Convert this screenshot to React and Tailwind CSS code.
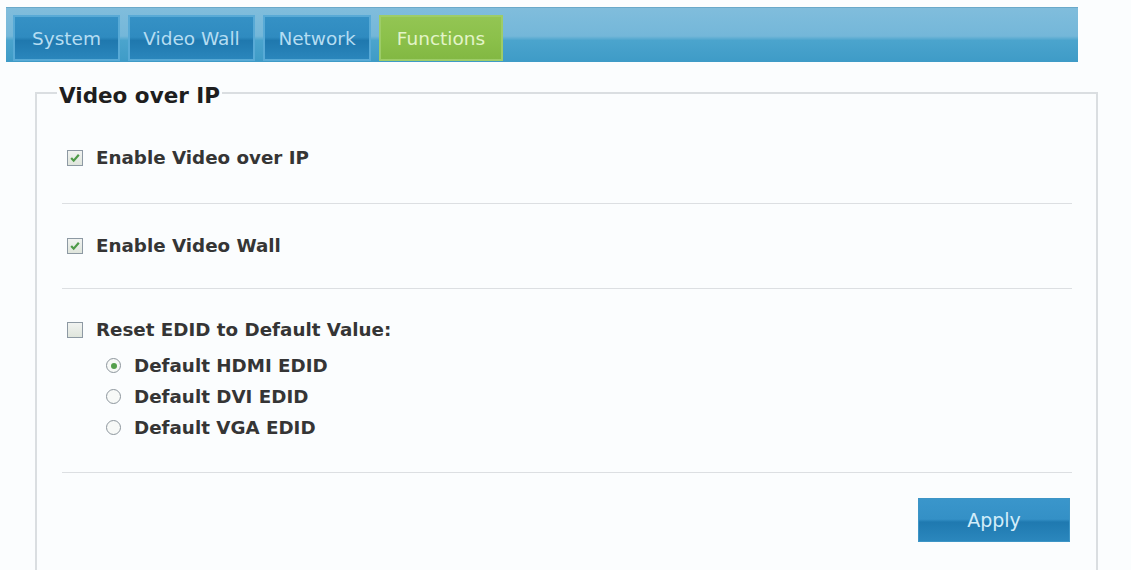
import { useState } from "react";

const tabs = [
    { label: "System", w: "w-[107px]" },
    { label: "Video Wall", w: "w-[127px]" },
    { label: "Network", w: "w-[108px]" },
    { label: "Functions", w: "w-[124px]", active: true },
];

function CheckBox({ checked, onClick }) {
    return (
        <span
            onClick={onClick}
            className="w-[16px] h-[16px] border border-[#8d99a3] bg-[linear-gradient(180deg,#f1f3f1,#dfe5dc)] flex items-center justify-center shrink-0 cursor-pointer"
        >
            {checked && (
                <svg width="12" height="12" viewBox="0 0 11 11">
                    <path
                        d="M2 5.5 L4.3 8 L9 2.5"
                        fill="none"
                        stroke="#4e9a48"
                        strokeWidth="2"
                    />
                </svg>
            )}
        </span>
    );
}

function Radio({ checked, onClick }) {
    return (
        <span
            onClick={onClick}
            className="w-[15px] h-[15px] rounded-full border border-[#8d969d] bg-[#f7f9f7] flex items-center justify-center shrink-0 cursor-pointer"
        >
            {checked && (
                <span className="w-[6px] h-[6px] rounded-full bg-[#55a04c]"></span>
            )}
        </span>
    );
}

export default function App() {
    const [vip, setVip] = useState(true);
    const [wall, setWall] = useState(true);
    const [reset, setReset] = useState(false);
    const [edid, setEdid] = useState("hdmi");

    const edids = [
        { key: "hdmi", label: "Default HDMI EDID" },
        { key: "dvi", label: "Default DVI EDID" },
        { key: "vga", label: "Default VGA EDID" },
    ];

    return (
        <div className="h-screen bg-[#fbfdfe] pt-[7px] pl-[6px] font-['DejaVu_Sans',Verdana,sans-serif] overflow-hidden">
            {/* Tab bar */}
            <div className="w-[1072px] h-[55px] border-t border-[#6aa9c9] bg-[linear-gradient(180deg,#80bddc_0%,#74b7d9_52%,#4ba4cd_60%,#3e9bc7_100%)] flex items-end pl-[7px] gap-[8px] pb-px">
                {tabs.map((t) => (
                    <div
                        key={t.label}
                        className={`${t.w} h-[46px] pt-[2px] flex items-center justify-center text-[18.5px] border-2 ${
                            t.active
                                ? "bg-[linear-gradient(180deg,#93c553_0%,#8bc04a_55%,#82b843_100%)] border-[#9dcc68] text-[#e3f4c8]"
                                : "bg-[linear-gradient(180deg,#3591c5_0%,#2f8bc0_48%,#1f78ae_56%,#2a86bc_100%)] border-[#58aad6] text-[#b5ddf2]"
                        }`}
                    >
                        {t.label}
                    </div>
                ))}
            </div>

            {/* Video over IP */}
            <fieldset className="ml-[29px] mt-[16px] w-[1063px] h-[520px] border-2 border-[#dadee1] pl-[20px] pr-[24px]">
                <legend className="px-[2px] pt-[6px] text-[21.5px] font-bold text-[#1e1e1e] leading-[24px]">
                    Video over IP
                </legend>

                <div className="ml-[5px] text-[18.3px] font-bold text-[#353535]">
                    <div className="pt-[38px] pb-[33px] border-b border-[#dcdfe2]">
                        <label className="h-[24px] flex items-center gap-[13px] pl-[5px]">
                            <CheckBox checked={vip} onClick={() => setVip(!vip)} />
                            Enable Video over IP
                        </label>
                    </div>

                    <div className="pt-[30px] pb-[30px] border-b border-[#dcdfe2]">
                        <label className="h-[24px] flex items-center gap-[13px] pl-[5px]">
                            <CheckBox checked={wall} onClick={() => setWall(!wall)} />
                            Enable Video Wall
                        </label>
                    </div>

                    <div className="pt-[29px] pb-[29px] border-b border-[#dcdfe2]">
                        <label className="h-[24px] flex items-center gap-[13px] pl-[5px]">
                            <CheckBox checked={reset} onClick={() => setReset(!reset)} />
                            Reset EDID to Default Value:
                        </label>
                        <div className="mt-[8px] pl-[44px]">
                            {edids.map((e) => (
                                <label
                                    key={e.key}
                                    className="h-[31px] flex items-center gap-[13px]"
                                >
                                    <Radio
                                        checked={edid === e.key}
                                        onClick={() => setEdid(e.key)}
                                    />
                                    {e.label}
                                </label>
                            ))}
                        </div>
                    </div>

                    <div className="flex justify-end pt-[25px]">
                        <button className="mr-[2px] w-[152px] h-[44px] border border-[#3d95c6] bg-[linear-gradient(180deg,#3a96cb_0%,#3490c6_48%,#1f79b0_55%,#2b87bd_100%)] text-[#d3edfa] text-[19px] font-normal">
                            Apply
                        </button>
                    </div>
                </div>
            </fieldset>
        </div>
    );
}
